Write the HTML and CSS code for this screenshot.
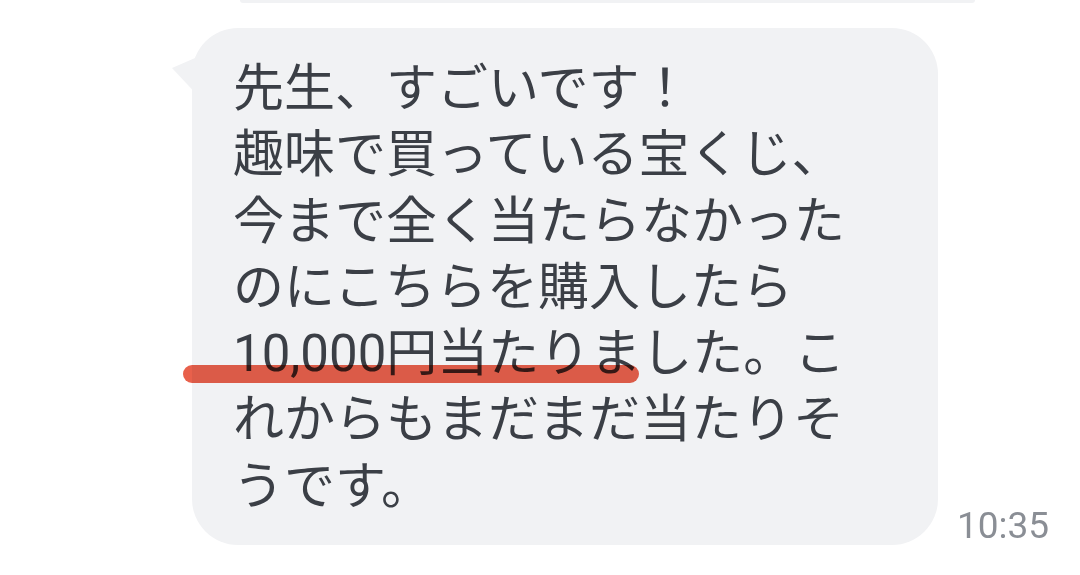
FILE: index.html
```html
<!DOCTYPE html>
<html lang="ja">
<head>
<meta charset="utf-8">
<link rel="stylesheet" href="styles.css">
</head>
<body>
<div class="prev-edge"></div>
<div class="row">
  <div class="bubble">
    <svg class="tail" width="30" height="50" viewBox="0 0 30 50"><polygon points="0,13 30,0 30,45" fill="#f1f2f4"/></svg>
    <p class="msg">先生、すごいです！<br>趣味で買っている宝くじ、<br>今まで全く当たらなかった<br>のにこちらを購入したら<br>10,000円当たりました。こ<br>れからもまだまだ当たりそ<br>うです。</p>
    <div class="mark"></div>
  </div>
  <div class="time">10:35</div>
</div>
</body>
</html>
```
FILE: styles.css
```css
html, body {
  margin: 0;
  padding: 0;
  background: #ffffff;
  width: 1080px;
  height: 575px;
  overflow: hidden;
}
.prev-edge {
  margin-left: 240px;
  width: 735px;
  height: 3px;
  background: #f1f2f4;
  border-radius: 0 0 3px 3px;
}
.row {
  display: flex;
  align-items: flex-end;
  margin-top: 25px;
  margin-left: 192px;
  gap: 19px;
}
.bubble {
  position: relative;
  width: 746px;
  height: 517px;
  box-sizing: border-box;
  background: #f1f2f4;
  border-radius: 46px;
  padding: 28px 0 0 41px;
}
.tail {
  position: absolute;
  left: -20px;
  top: 27px;
  overflow: visible;
}
.msg {
  margin: 0;
  font-family: Roboto, "Noto Sans CJK JP", sans-serif;
  font-size: 51px;
  line-height: 66.3px;
  color: #3b3f46;
  white-space: nowrap;
}
.mark {
  position: absolute;
  left: -9px;
  top: 337px;
  width: 456px;
  height: 18px;
  border-radius: 9px;
  background: #e8604b;
  mix-blend-mode: multiply;
  filter: blur(0.6px);
}
.time {
  font-family: Roboto, "Noto Sans", sans-serif;
  font-size: 37px;
  line-height: 37px;
  color: #8a8e95;
  margin-bottom: 1px;
}
```
